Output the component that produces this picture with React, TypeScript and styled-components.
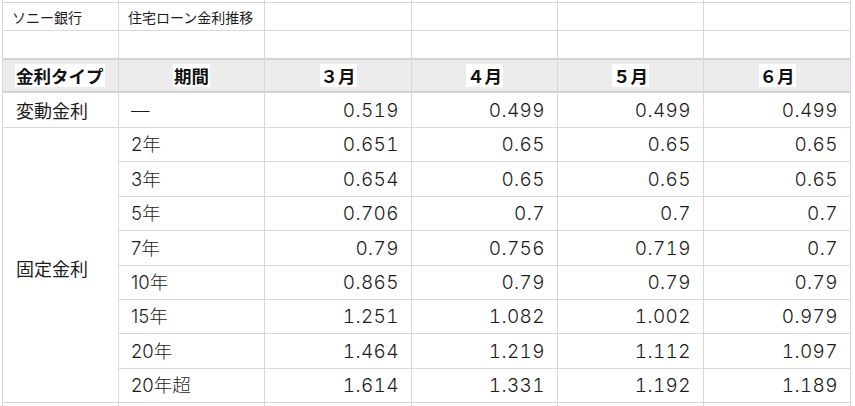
import React from "react";
import styled, { createGlobalStyle } from "styled-components";

const Global = createGlobalStyle`
  html, body { margin: 0; padding: 0; background: #ffffff; }
  body { font-family: "Inter", "Noto Sans CJK JP", "Noto Sans", sans-serif; color: #1c1c1c; overflow: hidden; }
`;

const Sheet = styled.div`
  display: grid;
  grid-template-columns: 115px 145px 146px 145px 145px 146px;
  grid-template-rows: 2px 27px 27px 33px 34px 33px 34px 33px 34px 33px 33px 34px 33px 12px;
  gap: 1px;
  background: #d8d8d8;
  margin-left: 2px;
  padding-left: 1px;
  border-right: 1px solid #dccbe8;
  width: max-content;
`;

type Align = "left" | "right" | "center";

const Cell = styled.div<{ $align?: Align; $size?: number; $header?: boolean; $span?: number }>`
  background: ${(p) => (p.$header ? "#ececec" : "#ffffff")};
  display: flex;
  align-items: center;
  justify-content: ${(p) =>
    p.$align === "right" ? "flex-end" : p.$align === "center" ? "center" : "flex-start"};
  padding: ${(p) => (p.$align === "right" ? "0 13px 0 0" : p.$align === "center" ? "0" : "0 0 0 12px")};
  font-size: ${(p) => p.$size ?? 19}px;
  font-weight: ${(p) => (p.$header ? 700 : 300)};
  line-height: 1;
  white-space: nowrap;
  ${(p) => (p.$span ? `grid-row: span ${p.$span};` : "")}
  ${(p) => (p.$header ? "box-shadow: inset 0 1px 0 #cfcfcf, inset 0 -1px 0 #cfcfcf;" : "")}
`;

const NumberCell = styled(Cell)`
  font-variant-numeric: tabular-nums;
  letter-spacing: 0.4px;
  padding-right: 12px;
`;

const TitleCell = styled(Cell)`
  padding-left: 9px;
  font-size: 14px;
  font-weight: 400;
  font-family: "Noto Sans CJK JP", sans-serif;
`;

const LabelCell = styled(Cell)`
  padding-left: 13px;
  font-size: 18px;
  font-weight: 400;
  font-family: "Noto Sans CJK JP", sans-serif;
`;

const TypeCell = styled(LabelCell)`
  padding-top: 6px;
`;

const HeaderLabel = styled.span`
  background: #ffffff;
  padding: 3px 1px;
  color: #111111;
  font-family: "Noto Sans CJK JP", sans-serif;
`;

const months = ["３月", "４月", "５月", "６月"];

const variableRow = ["0.519", "0.499", "0.499", "0.499"];

const fixedRows: { term: string; values: string[] }[] = [
  { term: "2年", values: ["0.651", "0.65", "0.65", "0.65"] },
  { term: "3年", values: ["0.654", "0.65", "0.65", "0.65"] },
  { term: "5年", values: ["0.706", "0.7", "0.7", "0.7"] },
  { term: "7年", values: ["0.79", "0.756", "0.719", "0.7"] },
  { term: "10年", values: ["0.865", "0.79", "0.79", "0.79"] },
  { term: "15年", values: ["1.251", "1.082", "1.002", "0.979"] },
  { term: "20年", values: ["1.464", "1.219", "1.112", "1.097"] },
  { term: "20年超", values: ["1.614", "1.331", "1.192", "1.189"] },
];

const blanks = (n: number, key: string) =>
  Array.from({ length: n }, (_, i) => <Cell key={`${key}-${i}`} />);

export default function App() {
  return (
    <>
      <Global />
      <Sheet>
        {blanks(6, "top")}

        <TitleCell>ソニー銀行</TitleCell>
        <TitleCell>住宅ローン金利推移</TitleCell>
        {blanks(4, "r1")}

        {blanks(6, "r2")}

        <Cell $header $size={17.5} style={{ paddingLeft: 12 }}>
          <HeaderLabel>金利タイプ</HeaderLabel>
        </Cell>
        <Cell $header $align="center" $size={17.5}>
          <HeaderLabel>期間</HeaderLabel>
        </Cell>
        {months.map((m) => (
          <Cell key={m} $header $align="center" $size={17.5}>
            <HeaderLabel>{m}</HeaderLabel>
          </Cell>
        ))}

        <LabelCell>変動金利</LabelCell>
        <Cell $size={18.5}>—</Cell>
        {variableRow.map((v, i) => (
          <NumberCell key={`v${i}`} $align="right">
            {v}
          </NumberCell>
        ))}

        {fixedRows.map((row, r) => (
          <React.Fragment key={row.term}>
            {r === 0 && <TypeCell $span={fixedRows.length}>固定金利</TypeCell>}
            <Cell $size={18.5}>{row.term}</Cell>
            {row.values.map((v, i) => (
              <NumberCell key={`${row.term}-${i}`} $align="right">
                {v}
              </NumberCell>
            ))}
          </React.Fragment>
        ))}

        {blanks(6, "bottom")}
      </Sheet>
    </>
  );
}
